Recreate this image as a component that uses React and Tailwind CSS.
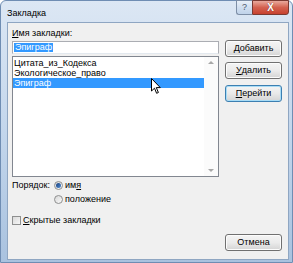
import clsx from "clsx";

const font = "font-['Liberation_Sans',Arial,sans-serif]";

function Btn({ children, isDefault, className }) {
  return (
    <div
      className={clsx(
        "h-[17px] rounded-[3px] border flex items-center justify-center text-[9px] leading-none text-black",
        isDefault
          ? "border-[#3c7fb1] bg-gradient-to-b from-[#f4f4f4] via-[#e9e9e9] to-[#d4d4d4] shadow-[inset_0_0_0_1px_#a8dcf6]"
          : "border-[#707070] bg-gradient-to-b from-[#f4f4f4] via-[#ebebeb] to-[#d4d4d4] shadow-[inset_0_0_0_1px_#fcfcfc]",
        className
      )}
    >
      {children}
    </div>
  );
}

function Radio({ checked }) {
  return (
    <div className="w-[9px] h-[9px] rounded-full border border-[#8e8f8f] bg-gradient-to-br from-[#d8d8d8] to-[#fafafa] flex items-center justify-center">
      {checked && (
        <div className="w-[5px] h-[5px] rounded-full bg-gradient-to-br from-[#1b3f7a] to-[#4f8ed8]" />
      )}
    </div>
  );
}

export default function App() {
  const items = ["Цитата_из_Кодекса", "Экологическое_право", "Эпиграф"];

  return (
    <div className={clsx("w-[293px] h-[263px] relative overflow-hidden bg-white", font)}>
      {/* ===== window frame ===== */}
      <div className="h-full flex flex-col rounded-t-[6px] border border-[#6f8db3] bg-gradient-to-b from-[#dce7f4] via-[#c3d6ec] to-[#a9c2df]">
        {/* title bar */}
        <div className="h-[21px] flex justify-between">
          <span className="pl-[6px] pt-[7px] text-[9px] leading-[11px] text-black">Закладка</span>
          <div className="flex items-start mr-[3px] -mt-[1px]">
            <div className="w-[16px] h-[15px] rounded-bl-[3px] border border-[#7d8ea6] border-r-0 bg-gradient-to-b from-[#e9f0f8] via-[#d1dff0] to-[#c0d3ea] flex items-center justify-center text-[9px] leading-none text-[#4d5b6e]">
              ?
            </div>
            <div className="w-[37px] h-[15px] rounded-br-[3px] border border-[#7a3a32] bg-gradient-to-b from-[#e8a99d] via-[#d3614f] to-[#c7412f] flex items-center justify-center text-[10px] leading-none font-bold text-white [text-shadow:0_0_1px_#5a1a10]">
              X
            </div>
          </div>
        </div>

        {/* ===== client area ===== */}
        <div className="flex-1 ml-[6px] mr-[3px] mb-[2px] border border-[#8fa6c2] bg-[#f0f0f0] flex gap-[6px] pl-[4px] text-[9px] leading-[11px] text-black">
          {/* left column */}
          <div className="w-[207px] flex flex-col">
            <div className="mt-[5px] h-[13px]">
              <span className="underline underline-offset-[1px]">И</span>мя закладки:
            </div>
            <div className="h-[13px] border border-[#abadb3] border-b-[#e3e9ef] bg-white flex items-center pl-[1px]">
              <span className="bg-[#3399ff] text-white px-[1px] h-[9px] leading-[9px]">Эпиграф</span>
            </div>

            <div className="mt-[2px] h-[121px] border border-[#828790] bg-white flex">
              <div className="flex-1 pt-[1px]">
                {items.map((item, i) => (
                  <div
                    key={item}
                    className={clsx(
                      "h-[10px] leading-[10px] pl-[1px]",
                      i === 2 && "bg-[#3399ff] text-white"
                    )}
                  >
                    {item}
                  </div>
                ))}
              </div>
              <div className="w-[14px] bg-[#fbfbfb] flex flex-col items-center justify-between py-[4px]">
                <div className="w-0 h-0 border-x-[3px] border-x-transparent border-b-[3px] border-b-[#a8a8a8]" />
                <div className="w-0 h-0 border-x-[3px] border-x-transparent border-t-[3px] border-t-[#a8a8a8]" />
              </div>
            </div>

            {/* order */}
            <div className="mt-[1px] flex">
              <div className="w-[42px] h-[14px] flex items-center">Порядок:</div>
              <div className="flex flex-col">
                <div className="h-[14px] flex items-center gap-[2px]">
                  <Radio checked />
                  <span>
                    им<span className="underline underline-offset-[1px]">я</span>
                  </span>
                </div>
                <div className="h-[14px] flex items-center gap-[2px]">
                  <Radio />
                  <span>положение</span>
                </div>
              </div>
            </div>

            <div className="mt-[8px] h-[12px] flex items-center gap-[2px]">
              <div className="w-[9px] h-[9px] border border-[#8e8f8f] bg-gradient-to-br from-[#dadada] to-[#f6f6f6]" />
              <span>
                <span className="underline underline-offset-[1px]">С</span>крытые закладки
              </span>
            </div>
          </div>

          {/* right column */}
          <div className="w-[57px] flex flex-col pt-[17px] pb-[8px]">
            <Btn>
              <span className="underline underline-offset-[1px]">Д</span>обавить
            </Btn>
            <Btn className="mt-[5px]">
              <span className="underline underline-offset-[1px]">У</span>далить
            </Btn>
            <Btn isDefault className="mt-[6px]">
              <span className="underline underline-offset-[1px]">П</span>ерейти
            </Btn>
            <Btn className="mt-auto">Отмена</Btn>
          </div>
        </div>
      </div>

      {/* mouse pointer */}
      <svg className="absolute left-[151px] top-[78px]" width="11" height="17" viewBox="0 0 11 17">
        <path
          d="M0.5 0.5 L0.5 13 L3.5 10.2 L5.6 15.3 L7.4 14.5 L5.3 9.6 L9.3 9.6 Z"
          fill="white"
          stroke="black"
          strokeWidth="1"
          strokeLinejoin="miter"
        />
      </svg>
    </div>
  );
}
